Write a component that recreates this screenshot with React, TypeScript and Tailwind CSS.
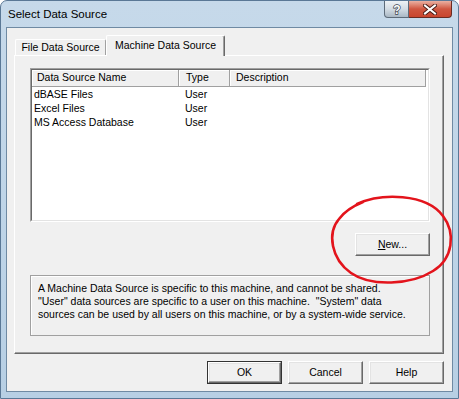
import React from "react";

const rows = [
  { name: "dBASE Files", type: "User" },
  { name: "Excel Files", type: "User" },
  { name: "MS Access Database", type: "User" },
];

// classic 3D push button
const WinButton: React.FC<{ children: React.ReactNode; isDefault?: boolean }> = ({
  children,
  isDefault,
}) => (
  <div
    className={`w-[75px] h-[23px] ${isDefault ? "border border-[#333]" : ""}`}
  >
    <div className="w-full h-full bg-[#f0f0f0] border border-t-white border-l-white border-r-[#696969] border-b-[#696969] shadow-[inset_-1px_-1px_0_#a0a0a0,inset_1px_1px_0_#e3e3e3] flex items-center justify-center text-[10.5px] text-black">
      {children}
    </div>
  </div>
);

const App: React.FC = () => {
  return (
    <div className="relative w-[459px] h-[399px] flex flex-col rounded-t-[7px] border border-[#5a7896] bg-gradient-to-b from-[#c6d9ea] via-[#bfd5e8] to-[#b7cfe4] font-['Liberation_Sans',sans-serif] overflow-hidden">
      {/* Title bar */}
      <div className="h-[26px] flex items-start">
        <div className="pl-[7px] pt-[5px] text-[11.5px] text-black leading-[16px]">
          Select Data Source
        </div>
        <div className="ml-auto mr-[6px] flex">
          <div className="w-[25px] h-[17px] rounded-bl-[4px] border border-t-0 border-[#5d6b79] bg-gradient-to-b from-[#eef2f5] via-[#d3dce4] to-[#aab8c5] flex items-center justify-center">
            <svg width="10" height="12" viewBox="0 0 10 12">
              <text
                x="5"
                y="10.5"
                textAnchor="middle"
                fontSize="12"
                fontWeight="bold"
                fontFamily="Liberation Sans, sans-serif"
                fill="#fff"
                stroke="#3b4450"
                strokeWidth="1.4"
                paintOrder="stroke"
              >
                ?
              </text>
            </svg>
          </div>
          <div className="w-[43px] h-[17px] rounded-br-[4px] border border-l-0 border-t-0 border-[#6a2b22] bg-gradient-to-b from-[#e9b0a2] via-[#cf5640] to-[#c9452d] flex items-center justify-center">
            <svg width="14" height="11" viewBox="0 0 14 11">
              <path
                d="M2 1.5 L12 9.5 M12 1.5 L2 9.5"
                stroke="#4a1d17"
                strokeWidth="4"
                strokeLinecap="square"
              />
              <path
                d="M2 1.5 L12 9.5 M12 1.5 L2 9.5"
                stroke="#fff"
                strokeWidth="2"
                strokeLinecap="square"
              />
            </svg>
          </div>
        </div>
      </div>

      {/* Client area */}
      <div className="mx-[5px] mb-[6px] flex-1 border border-[#6f8aa3] bg-[#f0f0f0] flex flex-col pl-[7px] pr-[8px] pt-[7px]">
        {/* Tabs */}
        <div className="h-[20px] flex items-end pl-[1px] relative z-10">
          <div className="w-[91px] h-[16px] border border-b-0 border-t-white border-l-white border-r-[#a0a0a0] rounded-t-[2px] flex items-center justify-center text-[10.5px] text-black bg-[#f0f0f0]">
            File Data Source
          </div>
          <div className="w-[119px] h-[21px] -mb-[1px] border border-b-0 border-t-white border-l-white border-r-[#696969] shadow-[inset_-1px_0_0_#a0a0a0] rounded-t-[2px] flex items-start justify-center pt-[2px] text-[10.5px] text-black bg-[#f0f0f0]">
            Machine Data Source
          </div>
        </div>

        {/* Tab panel */}
        <div className="h-[299px] border border-t-white border-l-white border-r-[#696969] border-b-[#696969] shadow-[inset_-1px_-1px_0_#a0a0a0] flex flex-col pl-[15px] pr-[13px] pt-[12px]">
          {/* List */}
          <div className="w-[400px] h-[154px] border border-t-[#a0a0a0] border-l-[#a0a0a0] border-r-white border-b-white bg-white">
            <div className="w-full h-full border border-t-[#696969] border-l-[#696969] border-r-[#e3e3e3] border-b-[#e3e3e3]">
              <div className="flex h-[17px] text-[10.5px] text-black">
                <div className="w-[147px] pl-[5px] flex items-center bg-[#f0f0f0] border-r border-b border-[#a0a0a0] shadow-[inset_1px_1px_0_#fff]">
                  Data Source Name
                </div>
                <div className="w-[51px] pl-[7px] flex items-center bg-[#f0f0f0] border-r border-b border-[#a0a0a0] shadow-[inset_1px_1px_0_#fff]">
                  Type
                </div>
                <div className="w-[196px] pl-[6px] flex items-center bg-[#f0f0f0] border-r border-b border-[#a0a0a0] shadow-[inset_1px_1px_0_#fff]">
                  Description
                </div>
              </div>
              <div className="pt-[1px]">
                {rows.map((r) => (
                  <div key={r.name} className="flex h-[14px] items-center text-[10.5px] text-black">
                    <div className="w-[147px] pl-[2px]">{r.name}</div>
                    <div className="w-[51px] pl-[6px]">{r.type}</div>
                  </div>
                ))}
              </div>
            </div>
          </div>

          {/* New button */}
          <div className="mt-[11px] self-end">
            <WinButton>
              <span>
                <span className="underline">N</span>ew...
              </span>
            </WinButton>
          </div>

          {/* Info */}
          <div className="mt-[19px] w-[400px] h-[61px] border border-[#a0a0a0] shadow-[inset_1px_1px_0_#fff] pl-[7px] pt-[6px] text-[10.5px] leading-[13px] text-black whitespace-pre">
            {"A Machine Data Source is specific to this machine, and cannot be shared.\n\"User\" data sources are specific to a user on this machine.  \"System\" data\nsources can be used by all users on this machine, or by a system-wide service."}
          </div>
        </div>

        {/* Buttons */}
        <div className="mt-[7px] flex justify-end gap-[6px]">
          <WinButton isDefault>OK</WinButton>
          <WinButton>Cancel</WinButton>
          <WinButton>Help</WinButton>
        </div>
      </div>

      {/* red marker circle drawn over the screenshot */}
      <svg
        className="absolute left-0 top-0 pointer-events-none"
        width="459"
        height="399"
        viewBox="0 0 459 399"
      >
        <path
          d="M356 203 C380 192, 425 192, 442 215 C455 232, 452 258, 432 270 C410 284, 370 286, 350 272 C330 258, 326 232, 338 218 C344 210, 352 205, 362 201"
          fill="none"
          stroke="#e3141c"
          strokeWidth="2.6"
          strokeLinecap="round"
        />
      </svg>
    </div>
  );
};

export default App;
